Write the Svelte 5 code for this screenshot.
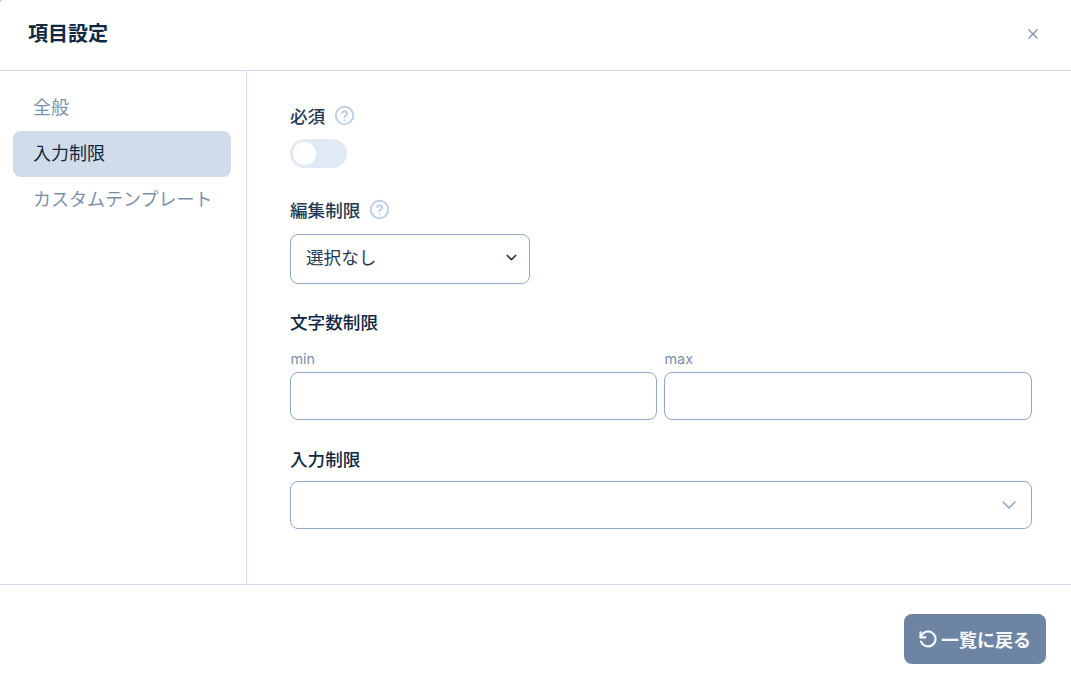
<script>
    const tabs = ["全般", "入力制限", "カスタムテンプレート"];
    let activeTab = $state("入力制限");
    let required = $state(false);
</script>

{#snippet help()}
    <svg class="help" viewBox="0 0 24 24" fill="none" stroke="currentColor" stroke-width="2.2" stroke-linecap="round" stroke-linejoin="round">
        <circle cx="12" cy="12" r="10" />
        <path d="M9.1 9a3 3 0 0 1 5.8 1c0 2-3 2.6-3 4" />
        <path d="M12 17.5h.01" />
    </svg>
{/snippet}

{#snippet chevron(cls)}
    <svg class="chevron {cls}" viewBox="0 0 24 24" fill="none" stroke="currentColor" stroke-linecap="round" stroke-linejoin="round">
        <path d="M6 9l6 6l6-6" />
    </svg>
{/snippet}

<div class="modal">
    <header class="head">
        <h1>項目設定</h1>
        <button class="close" aria-label="閉じる">
            <svg viewBox="0 0 12 12" fill="none" stroke="currentColor" stroke-width="1.2">
                <path d="M1.5 1.5l9 9M10.5 1.5l-9 9" />
            </svg>
        </button>
    </header>

    <div class="body">
        <nav class="side">
            {#each tabs as tab}
                <button class="tab" class:active={activeTab === tab} onclick={() => (activeTab = tab)}>{tab}</button>
            {/each}
        </nav>

        <main class="form">
            <section class="field first">
                <div class="label">必須 {@render help()}</div>
                <button class="switch" class:on={required} aria-label="必須" onclick={() => (required = !required)}>
                    <span class="knob"></span>
                </button>
            </section>

            <section class="field edit">
                <div class="label">編集制限 {@render help()}</div>
                <div class="select small">
                    <span>選択なし</span>
                    {@render chevron("dark")}
                </div>
            </section>

            <section class="field count">
                <div class="label strong">文字数制限</div>
                <div class="pair">
                    <label>
                        <span>min</span>
                        <input type="text" />
                    </label>
                    <label>
                        <span>max</span>
                        <input type="text" />
                    </label>
                </div>
            </section>

            <section class="field limit">
                <div class="label strong">入力制限</div>
                <div class="select wide">
                    <span></span>
                    {@render chevron("pale")}
                </div>
            </section>
        </main>
    </div>

    <footer class="foot">
        <button class="back">
            <svg viewBox="0 0 24 24" fill="none" stroke="currentColor" stroke-linecap="round" stroke-linejoin="round">
                <path d="M3 4v6h6" />
                <path d="M3.6 15a9 9 0 1 0 .9-8L3 10" />
            </svg>
            一覧に戻る
        </button>
    </footer>
</div>

<style>
    :global(body) {
        margin: 0;
        background: #a9bcd6;
    }

    .modal {
        width: 1071px;
        height: 688px;
        display: flex;
        flex-direction: column;
        background: #fff;
        border-top-left-radius: 3px;
        font-family: Inter, "Noto Sans CJK JP", sans-serif;
        color: #102a43;
        overflow: hidden;
    }

    .head {
        height: 71px;
        flex: none;
        box-sizing: border-box;
        display: flex;
        align-items: center;
        justify-content: space-between;
        padding: 0 32.5px 2px 28px;
        border-bottom: 1px solid #cfdcea;
    }

    h1 {
        margin: 0;
        font-size: 20px;
        font-weight: 700;
        line-height: 28px;
    }

    .close {
        width: 12px;
        height: 12px;
        padding: 0;
        border: 0;
        background: none;
        color: #7b8fab;
        display: flex;
    }

    .close svg {
        width: 12px;
        height: 12px;
    }

    .body {
        height: 514px;
        flex: none;
        box-sizing: border-box;
        display: flex;
        border-bottom: 1px solid #cfdcea;
    }

    .side {
        flex: none;
        border-right: 1px solid #cfdcea;
        padding: 14px 15px 0 13px;
        box-sizing: border-box;
        width: 247px;
        display: flex;
        flex-direction: column;
    }

    .tab {
        height: 46px;
        flex: none;
        padding: 0 0 4px 20px;
        border: 0;
        border-radius: 8px;
        background: none;
        text-align: left;
        font: inherit;
        font-size: 18px;
        color: #7b8fab;
        white-space: nowrap;
    }

    .tab.active {
        background: #d0dcea;
        color: #102a43;
    }

    .form {
        flex: 1;
        padding: 0 39px 0 43px;
        min-width: 0;
    }

    .field {
        display: flex;
        flex-direction: column;
    }

    .first {
        padding-top: 33px;
    }

    .edit {
        padding-top: 30px;
    }

    .count {
        padding-top: 26px;
    }

    .limit {
        padding-top: 27px;
    }

    .label {
        height: 26px;
        display: flex;
        align-items: center;
        gap: 9px;
        font-size: 17.6px;
        font-weight: 500;
        line-height: 26px;
        color: #243b53;
    }

    .label.strong {
        color: #102a43;
    }

    .help {
        width: 21px;
        height: 21px;
        color: #bccfe4;
        margin-top: -4px;
    }

    .switch {
        width: 57px;
        height: 29px;
        margin-top: 9px;
        padding: 3px;
        border: 0;
        border-radius: 15px;
        background: #e1e9f4;
        display: flex;
    }

    .switch.on {
        justify-content: flex-end;
        background: #6e84a3;
    }

    .knob {
        width: 23px;
        height: 23px;
        border-radius: 50%;
        background: #fff;
    }

    .select {
        display: flex;
        align-items: center;
        justify-content: space-between;
        box-sizing: border-box;
        border: 1px solid #93a9c9;
        border-radius: 8px;
        background: #fff;
        font-size: 17.6px;
        color: #243b53;
    }

    .select.small {
        width: 240px;
        height: 50px;
        margin-top: 10px;
        padding: 0 9px 5px 15px;
    }

    .select.wide {
        height: 48px;
        margin-top: 8px;
        padding: 0 10px 0 13px;
    }

    .chevron {
        width: 24px;
        height: 24px;
    }

    .chevron.dark {
        width: 17px;
        height: 17px;
        margin-top: 2px;
        color: #243b53;
        stroke-width: 2;
    }

    .chevron.pale {
        color: #93a9c9;
        stroke-width: 1.6;
    }

    .pair {
        display: grid;
        grid-template-columns: 367fr 368fr;
        gap: 7px;
        margin-top: 13px;
    }

    .pair label {
        display: flex;
        flex-direction: column;
    }

    .pair span {
        font-size: 14.4px;
        line-height: 20px;
        height: 20px;
        padding-left: 0.5px;
        color: #7b8fab;
    }

    .pair input {
        height: 48px;
        margin-top: 3px;
        box-sizing: border-box;
        width: 100%;
        border: 1px solid #93a9c9;
        border-radius: 8px;
        background: #fff;
        outline: none;
        font: inherit;
    }

    .foot {
        flex: 1;
        display: flex;
        align-items: flex-start;
        justify-content: flex-end;
        padding: 29px 25px 0 0;
    }

    .back {
        width: 142px;
        height: 50px;
        border: 0;
        border-radius: 8px;
        background: #6e84a3;
        color: #f5f8fb;
        font: inherit;
        font-size: 18px;
        font-weight: 700;
        display: flex;
        align-items: center;
        justify-content: center;
        gap: 3px;
        padding: 0 1px 0 0;
        white-space: nowrap;
    }

    .back svg {
        width: 20px;
        height: 20px;
        flex: none;
        stroke-width: 2.6;
    }
</style>
